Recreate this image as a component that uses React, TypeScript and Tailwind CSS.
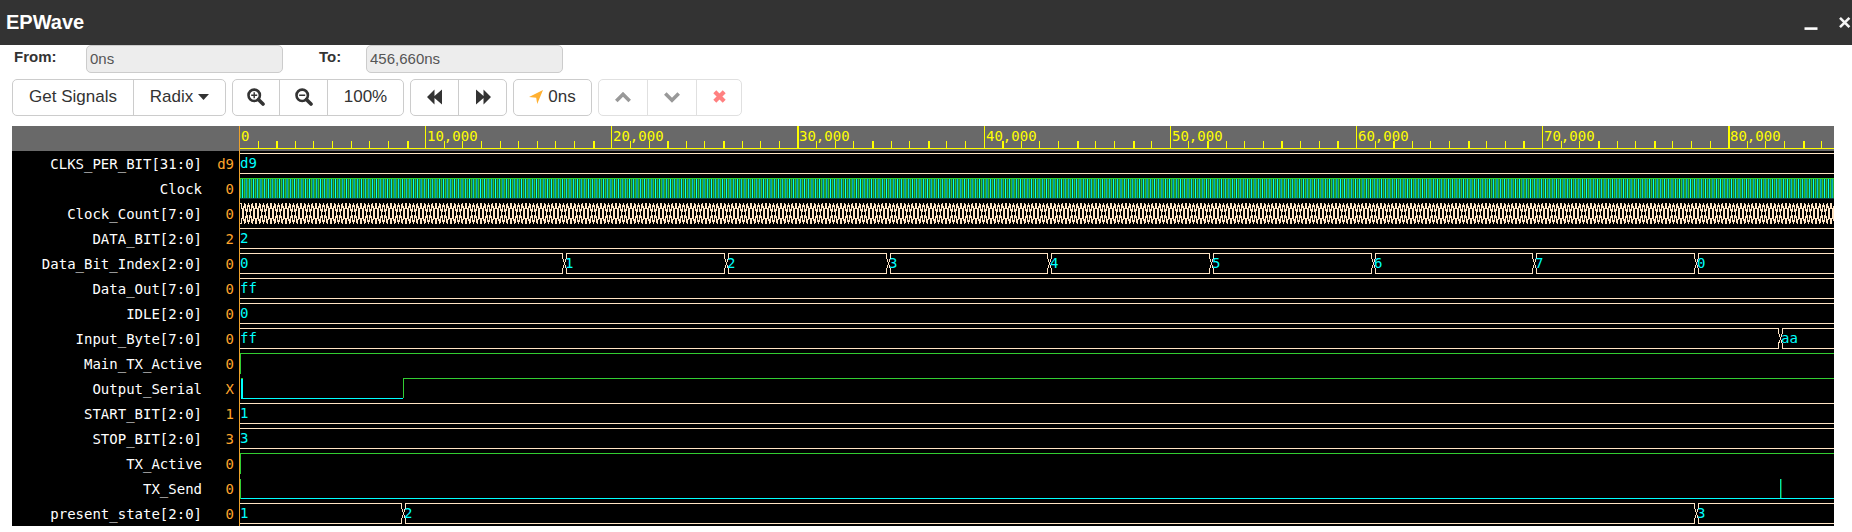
import React, { useLayoutEffect, useRef, useState } from "react";

const ROW = 25;
const RULER = 25;
const BUS = "#ffe4c4";
const LOW = "#00ffff";
const HIGH = "#32cd32";
const STEP = 18.615;
const LABEL_WIDTH = 56;

type Segment = { at: number; text: string };
type Signal = {
  name: string;
  value: string;
  kind: "bus" | "clock" | "count" | "high" | "serial" | "pulse";
  segments?: Segment[];
};

const signals: Signal[] = [
  { name: "CLKS_PER_BIT[31:0]", value: "d9", kind: "bus", segments: [{ at: 0, text: "d9" }] },
  { name: "Clock", value: "0", kind: "clock" },
  { name: "Clock_Count[7:0]", value: "0", kind: "count" },
  { name: "DATA_BIT[2:0]", value: "2", kind: "bus", segments: [{ at: 0, text: "2" }] },
  {
    name: "Data_Bit_Index[2:0]",
    value: "0",
    kind: "bus",
    segments: [
      { at: 0, text: "0" },
      { at: 325, text: "1" },
      { at: 487, text: "2" },
      { at: 649, text: "3" },
      { at: 810, text: "4" },
      { at: 972, text: "5" },
      { at: 1134, text: "6" },
      { at: 1295, text: "7" },
      { at: 1457, text: "0" },
    ],
  },
  { name: "Data_Out[7:0]", value: "0", kind: "bus", segments: [{ at: 0, text: "ff" }] },
  { name: "IDLE[2:0]", value: "0", kind: "bus", segments: [{ at: 0, text: "0" }] },
  {
    name: "Input_Byte[7:0]",
    value: "0",
    kind: "bus",
    segments: [
      { at: 0, text: "ff" },
      { at: 1541, text: "aa" },
    ],
  },
  { name: "Main_TX_Active", value: "0", kind: "high" },
  { name: "Output_Serial", value: "X", kind: "serial" },
  { name: "START_BIT[2:0]", value: "1", kind: "bus", segments: [{ at: 0, text: "1" }] },
  { name: "STOP_BIT[2:0]", value: "3", kind: "bus", segments: [{ at: 0, text: "3" }] },
  { name: "TX_Active", value: "0", kind: "high" },
  { name: "TX_Send", value: "0", kind: "pulse" },
  {
    name: "present_state[2:0]",
    value: "0",
    kind: "bus",
    segments: [
      { at: 0, text: "1" },
      { at: 164, text: "2" },
      { at: 1457, text: "3" },
    ],
  },
];

const WIDE_TICKS = new Set([2, 9, 19, 23, 26, 30, 34, 37, 41, 45, 48, 52, 56, 59, 62, 66, 69, 73, 76, 80, 84]);

function Ruler({ width }: { width: number }) {
  const ticks = Array.from({ length: Math.ceil(width / STEP) }, (_, i) => i);
  return (
    <g>
      <rect x="0" y="0" width={width} height={RULER} fill="#696969" />
      <rect x="1" y="22" width={width} height="1" fill="#ffff00" />
      {ticks.slice(1).map((k) => {
        const wide = WIDE_TICKS.has(k);
        const x = Math.round(k * STEP) - (wide ? 1 : 0);
        const major = k % 10 === 0;
        return (
          <rect
            key={k}
            x={wide ? x + 1 : x}
            y={major ? 0 : 15}
            width={wide ? 2 : 1}
            height={major ? 22 : 7}
            fill="#ffff00"
          />
        );
      })}
      {ticks
        .filter((k) => k % 10 === 0 && k * STEP + LABEL_WIDTH < width)
        .map((k) => (
          <text key={k} x={Math.round(k * STEP) + 2} y="15" fill="#ffff00">
            {(k * 1000).toLocaleString("en-US")}
          </text>
        ))}
    </g>
  );
}

function Bus({ segments, width }: { segments: Segment[]; width: number }) {
  return (
    <g>
      {segments
        .filter((s) => s.at + 20 < width)
        .map((s, i) => {
          const start = i === 0 ? 1 : s.at + 2;
          const next = segments[i + 1];
          const end = next ? next.at - 2 : width;
          return (
            <g key={i}>
              <g stroke={BUS} fill="none" shapeRendering="crispEdges">
                <path d={`M${start} 2.5H${end}M${start} 22.5H${end}`} />
                {i > 0 && (
                  <path
                    d={`M${s.at - 1.5} 2V7L${s.at + 0.5} 12.5L${s.at - 1.5} 18V23M${s.at + 2.5} 2V7L${s.at + 0.5} 12.5L${s.at + 2.5} 18V23`}
                  />
                )}
              </g>
              <text x={i === 0 ? 1 : s.at + 1} y="17" fill={LOW}>
                {s.text}
              </text>
            </g>
          );
        })}
    </g>
  );
}

function Wave({ signal, width }: { signal: Signal; width: number }) {
  switch (signal.kind) {
    case "bus":
      return <Bus segments={signal.segments ?? []} width={width} />;
    case "clock": {
      let high = "";
      let low = "";
      for (let x = 1.5; x < width; x += 3.723) {
        high += `M${x.toFixed(2)} 2V22`;
        low += `M${(x + 1.86).toFixed(2)} 2V22`;
      }
      return (
        <g fill="none">
          <path d={low} stroke={LOW} strokeWidth="1.25" />
          <path d={high} stroke={HIGH} strokeWidth="1.5" />
          <path d={`M1 2.5H${width}`} stroke={HIGH} />
          <path d={`M1 22.5H${width}`} stroke="#0a3d3d" />
        </g>
      );
    }
    case "count": {
      let d = "";
      for (let x = 2; x < width; x += 3.75) {
        const l = x.toFixed(2);
        const r = (x + 3.75).toFixed(2);
        d += `M${l} 2L${r} 23M${l} 23L${r} 2`;
      }
      return <path d={d} stroke={BUS} strokeWidth="1.25" fill="none" shapeRendering="crispEdges" />;
    }
    case "high":
      return <path d={`M1.5 23V2.5H${width}`} stroke={HIGH} fill="none" shapeRendering="crispEdges" />;
    case "serial":
      return (
        <g fill="none" shapeRendering="crispEdges">
          <path d="M2 2.5H4" stroke={HIGH} />
          <path d="M3 3V22.5H164" stroke={LOW} />
          <path d="M3 3V23" stroke={LOW} strokeWidth="2" />
          <path d={`M164.5 22V2.5H${width}`} stroke={HIGH} />
        </g>
      );
    case "pulse":
      return (
        <g fill="none" shapeRendering="crispEdges">
          <path d="M1.5 3V23" stroke={HIGH} />
          <path d={`M2 22.5H${width}`} stroke={LOW} />
          <path d="M1541.5 3V22" stroke="#00e6a8" />
          <path d="M1542.5 3V22" stroke="#116b22" />
        </g>
      );
  }
}

function Waveforms() {
  const ref = useRef<SVGSVGElement>(null);
  const [width, setWidth] = useState(0);

  useLayoutEffect(() => {
    const measure = () => setWidth(ref.current?.getBoundingClientRect().width ?? 0);
    measure();
    window.addEventListener("resize", measure);
    return () => window.removeEventListener("resize", measure);
  }, []);

  return (
    <svg
      ref={ref}
      height={RULER + signals.length * ROW}
      className="w-0 grow overflow-hidden"
      role="img"
      aria-label="Waveforms"
    >
      <Ruler width={width} />
      {signals.map((s, i) => (
        <g key={s.name} transform={`translate(0 ${RULER + i * ROW})`}>
          <Wave signal={s} width={width} />
        </g>
      ))}
      <rect x="0" y="0" width="1" height="100%" fill="#eda12c" />
    </svg>
  );
}

const groupClass = "flex h-[37px] divide-x divide-[#ccc] overflow-hidden rounded-[5px] border border-[#ccc] bg-white";
const buttonClass = "flex items-center justify-center pb-0.5";

function Zoom({ plus }: { plus?: boolean }) {
  return (
    <svg width="18" height="18" viewBox="0 0 18 18" fill="none" stroke="#333" aria-hidden="true">
      <circle cx="7.2" cy="7.3" r="5.7" strokeWidth="2.6" />
      <path d="M11.4 11.5L16 16" strokeWidth="3.6" strokeLinecap="round" />
      <path d={plus ? "M4.2 7.3H10.2M7.2 4.3V10.3" : "M4.2 7.3H10.2"} strokeWidth="1.4" />
    </svg>
  );
}

export default function App() {
  return (
    <div className="bg-white font-['Liberation_Sans',Arial,sans-serif] text-[#333]">
      <header className="flex h-[45px] items-center justify-between bg-[#333] pb-0.5 pl-1.5 text-white">
        <h1 className="text-[20px] leading-6 font-bold">EPWave</h1>
        <div className="flex items-center gap-5">
          <button type="button" aria-label="Minimize">
            <svg width="14" height="16" viewBox="0 0 14 16" fill="none" stroke="#fff" aria-hidden="true">
              <path d="M0.5 14.6H13.5" strokeWidth="2.6" />
            </svg>
          </button>
          <button type="button" aria-label="Close">
            <svg width="14" height="16" viewBox="0 0 14 16" fill="none" stroke="#f5f5f5" aria-hidden="true">
              <path d="M2 3.8L11.4 13.2M11.4 3.8L2 13.2" strokeWidth="2.6" />
            </svg>
          </button>
        </div>
      </header>

      <form className="flex h-7 pl-3.5 text-[15px]">
        <label htmlFor="from" className="w-[72px] pt-px leading-[22px] font-bold">
          From:
        </label>
        <input
          id="from"
          readOnly
          value="0ns"
          className="mr-9 h-7 w-[197px] rounded-[5px] border border-[#ccc] bg-[#ededed] px-[3px] pb-0.5 text-[#555]"
        />
        <label htmlFor="to" className="w-[47px] pt-px leading-[22px] font-bold">
          To:
        </label>
        <input
          id="to"
          readOnly
          value="456,660ns"
          className="h-7 w-[197px] rounded-[5px] border border-[#ccc] bg-[#ededed] px-[3px] pb-0.5 text-[#555]"
        />
      </form>

      <div className="flex gap-1.5 px-3 pt-1.5 pb-2.5 text-[17px]">
        <div className={groupClass}>
          <button type="button" className={`${buttonClass} w-[121px]`}>
            Get Signals
          </button>
          <button type="button" className={`${buttonClass} w-[91px] gap-[5px]`}>
            Radix
            <svg width="11" height="6" viewBox="0 0 11 6" fill="#333" aria-hidden="true">
              <path d="M0 0H11L5.5 6Z" />
            </svg>
          </button>
        </div>
        <div className={groupClass}>
          <button type="button" aria-label="Zoom in" className={`${buttonClass} w-[47px]`}>
            <Zoom plus />
          </button>
          <button type="button" aria-label="Zoom out" className={`${buttonClass} w-[48px]`}>
            <Zoom />
          </button>
          <button type="button" className={`${buttonClass} w-[75px]`}>
            100%
          </button>
        </div>
        <div className={groupClass}>
          <button type="button" aria-label="Previous edge" className={`${buttonClass} w-[48px]`}>
            <svg width="16" height="16" viewBox="0 0 16 16" fill="#333" aria-hidden="true">
              <path d="M0 8L7.5 0.5V7L15 0.5V15.5L7.5 9V15.5Z" />
            </svg>
          </button>
          <button type="button" aria-label="Next edge" className={`${buttonClass} w-[47px]`}>
            <svg width="16" height="16" viewBox="0 0 16 16" fill="#333" aria-hidden="true">
              <path d="M16 8L8.5 0.5V7L1 0.5V15.5L8.5 9V15.5Z" />
            </svg>
          </button>
        </div>
        <div className={groupClass}>
          <button type="button" className={`${buttonClass} w-[77px] gap-[5px]`}>
            <svg width="14" height="14" viewBox="0 0 14 14" fill="#ffb031" aria-hidden="true">
              <path d="M14 0L8.2 14L7.2 7.7L0 7Z" />
            </svg>
            0ns
          </button>
        </div>
        <div className="flex h-[37px] divide-x divide-[#e0e0e0] overflow-hidden rounded-[5px] border border-[#e0e0e0]">
          <button type="button" disabled aria-label="Move up" className={`${buttonClass} w-[49px]`}>
            <svg width="16" height="12" viewBox="0 0 16 12" fill="none" stroke="#999" aria-hidden="true">
              <path d="M1.3 9.9L8 3.2L14.7 9.9" strokeWidth="3.6" />
            </svg>
          </button>
          <button type="button" disabled aria-label="Move down" className={`${buttonClass} w-[49px]`}>
            <svg width="16" height="12" viewBox="0 0 16 12" fill="none" stroke="#999" aria-hidden="true">
              <path d="M1.3 2.6L8 9.3L14.7 2.6" strokeWidth="3.6" />
            </svg>
          </button>
          <button type="button" disabled aria-label="Remove" className={`${buttonClass} w-[44px]`}>
            <svg width="13" height="13" viewBox="0 0 13 13" fill="none" stroke="#ff8080" aria-hidden="true">
              <path d="M1.8 1.8L11.2 11.2M11.2 1.8L1.8 11.2" strokeWidth="4.2" />
            </svg>
          </button>
        </div>
      </div>

      <main className="mr-[18px] ml-3 flex bg-black font-['DejaVu_Sans_Mono',monospace] text-[14px] leading-[25px]">
        <div className="w-[227px] shrink-0">
          <div className="h-[25px] bg-[#696969]" />
          {signals.map((s) => (
            <div key={s.name} className="flex h-[25px] pt-px pr-[5px]">
              <span className="grow pr-0.5 text-right text-white">{s.name}</span>
              <span className="w-[30px] text-right text-[#ffa52c]">{s.value}</span>
            </div>
          ))}
        </div>
        <Waveforms />
      </main>
    </div>
  );
}
